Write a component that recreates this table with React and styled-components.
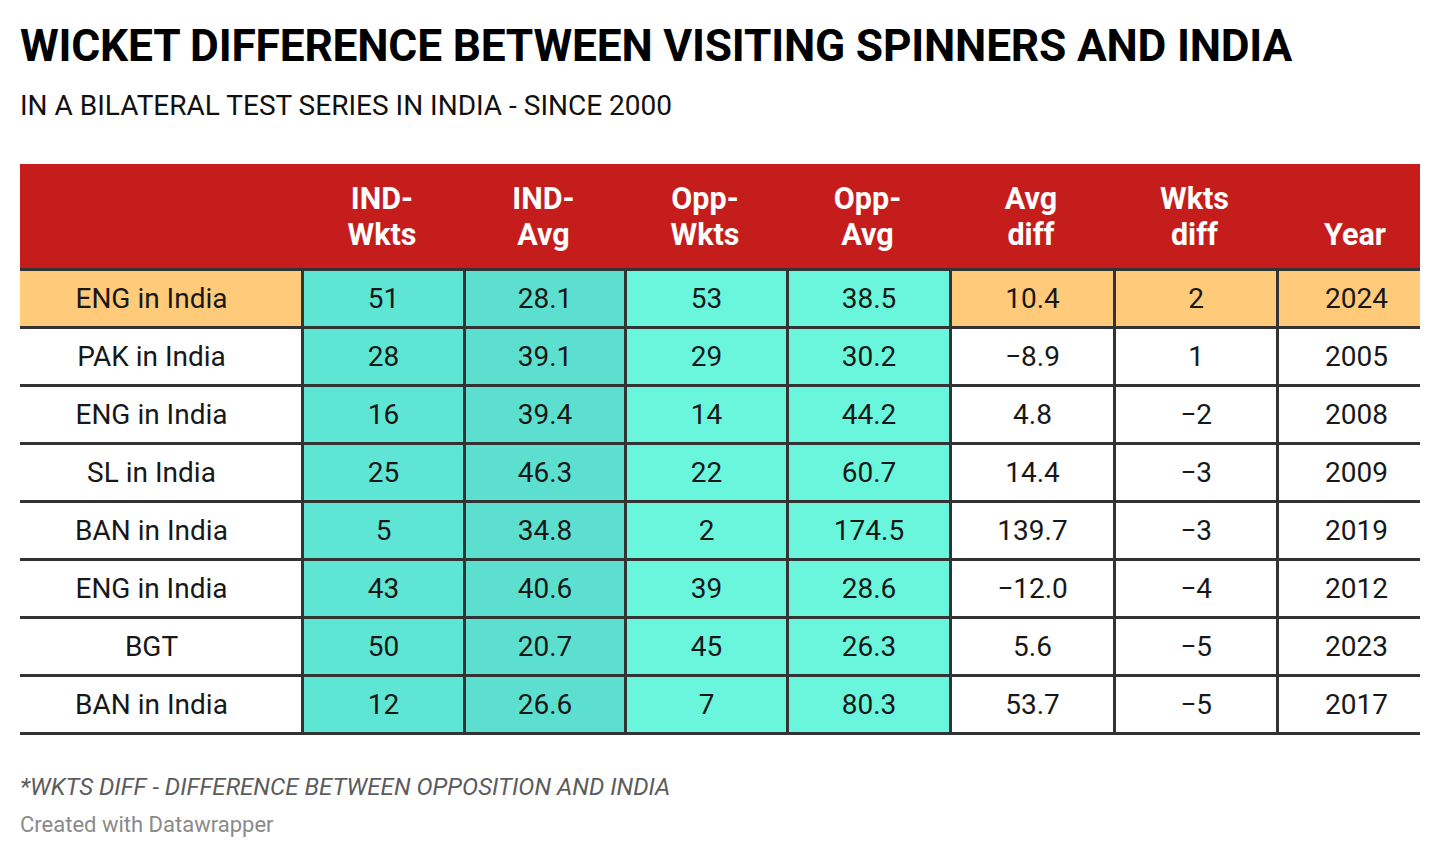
import React from 'react';
import styled, { createGlobalStyle } from 'styled-components';

const GlobalStyle = createGlobalStyle`
  body {
    margin: 0;
    background: #fff;
    font-family: Roboto, "Liberation Sans", sans-serif;
    color: #181818;
  }
`;

const COLS = ['IND-\nWkts', 'IND-\nAvg', 'Opp-\nWkts', 'Opp-\nAvg', 'Avg\ndiff', 'Wkts\ndiff', 'Year'];

const ROWS = [
  ['ENG in India', '51', '28.1', '53', '38.5', '10.4', '2', '2024'],
  ['PAK in India', '28', '39.1', '29', '30.2', '\u22128.9', '1', '2005'],
  ['ENG in India', '16', '39.4', '14', '44.2', '4.8', '\u22122', '2008'],
  ['SL in India', '25', '46.3', '22', '60.7', '14.4', '\u22123', '2009'],
  ['BAN in India', '5', '34.8', '2', '174.5', '139.7', '\u22123', '2019'],
  ['ENG in India', '43', '40.6', '39', '28.6', '\u221212.0', '\u22124', '2012'],
  ['BGT', '50', '20.7', '45', '26.3', '5.6', '\u22125', '2023'],
  ['BAN in India', '12', '26.6', '7', '80.3', '53.7', '\u22125', '2017'],
];

// teal shades for the four wicket/average columns
const FILLS = [null, '#5fe5d4', '#5cdfcf', '#69f6dc', '#69f6dc', null, null, null];

const Page = styled.div`
  padding: 20px 20px 0;
`;

const Title = styled.h1`
  margin: 0;
  font-size: 44.3px;
  font-weight: 700;
  line-height: 52px;
  letter-spacing: -0.2px;
  color: #000;
`;

const Subtitle = styled.p`
  margin: 16px 0 0;
  font-size: 28px;
  font-weight: 400;
  line-height: 36px;
  color: #111;
`;

const Table = styled.div`
  margin-top: 40px;
  width: 1400px;
`;

const Row = styled.div`
  display: grid;
  grid-template-columns: 281px 162px 161px 162px 163px 164px 163px 1fr;
  border-bottom: 3px solid #333;
  background: ${(p) => (p.$head ? '#c41d1b' : '#fff')};
`;

const HeadCell = styled.div`
  height: 104px;
  display: flex;
  align-items: flex-end;
  justify-content: ${(p) => (p.$right ? 'flex-end' : 'center')};
  padding: 0 ${(p) => (p.$right ? '34px' : '0')} 15px 0;
  box-sizing: border-box;
  color: #fff;
  font-size: 30.5px;
  font-weight: 700;
  line-height: 36px;
  text-align: center;
  white-space: pre-line;
`;

const Cell = styled.div`
  height: 55px;
  display: flex;
  align-items: center;
  justify-content: ${(p) => (p.$right ? 'flex-end' : 'center')};
  padding-right: ${(p) => (p.$right ? '32px' : p.$first ? '18px' : '0')};
  box-sizing: border-box;
  border-left: ${(p) => (p.$first ? 'none' : '3px solid #333')};
  background: ${(p) => p.$fill || (p.$hl ? '#ffca7a' : '#fff')};
  font-size: 28px;
  font-weight: 400;
  color: #181818;
`;

const Note = styled.p`
  margin: 37px 0 0;
  font-size: 24.1px;
  font-style: italic;
  line-height: 30px;
  color: #5c5c5c;
`;

const Credit = styled.p`
  margin: 10px 0 0;
  font-size: 22px;
  line-height: 26px;
  color: #8a8a8a;
`;

export default function App() {
  return (
    <Page>
      <GlobalStyle />
      <Title>WICKET DIFFERENCE BETWEEN VISITING SPINNERS AND INDIA</Title>
      <Subtitle>IN A BILATERAL TEST SERIES IN INDIA - SINCE 2000</Subtitle>
      <Table>
        <Row $head>
          <HeadCell />
          {COLS.map((c, i) => (
            <HeadCell key={c} $right={i === COLS.length - 1}>
              {c}
            </HeadCell>
          ))}
        </Row>
        {ROWS.map((r, ri) => (
          <Row key={ri}>
            {r.map((v, ci) => (
              <Cell
                key={ci}
                $first={ci === 0}
                $right={ci === r.length - 1}
                $fill={FILLS[ci]}
                $hl={ri === 0}
              >
                {v}
              </Cell>
            ))}
          </Row>
        ))}
      </Table>
      <Note>*WKTS DIFF - DIFFERENCE BETWEEN OPPOSITION AND INDIA</Note>
      <Credit>Created with Datawrapper</Credit>
    </Page>
  );
}
